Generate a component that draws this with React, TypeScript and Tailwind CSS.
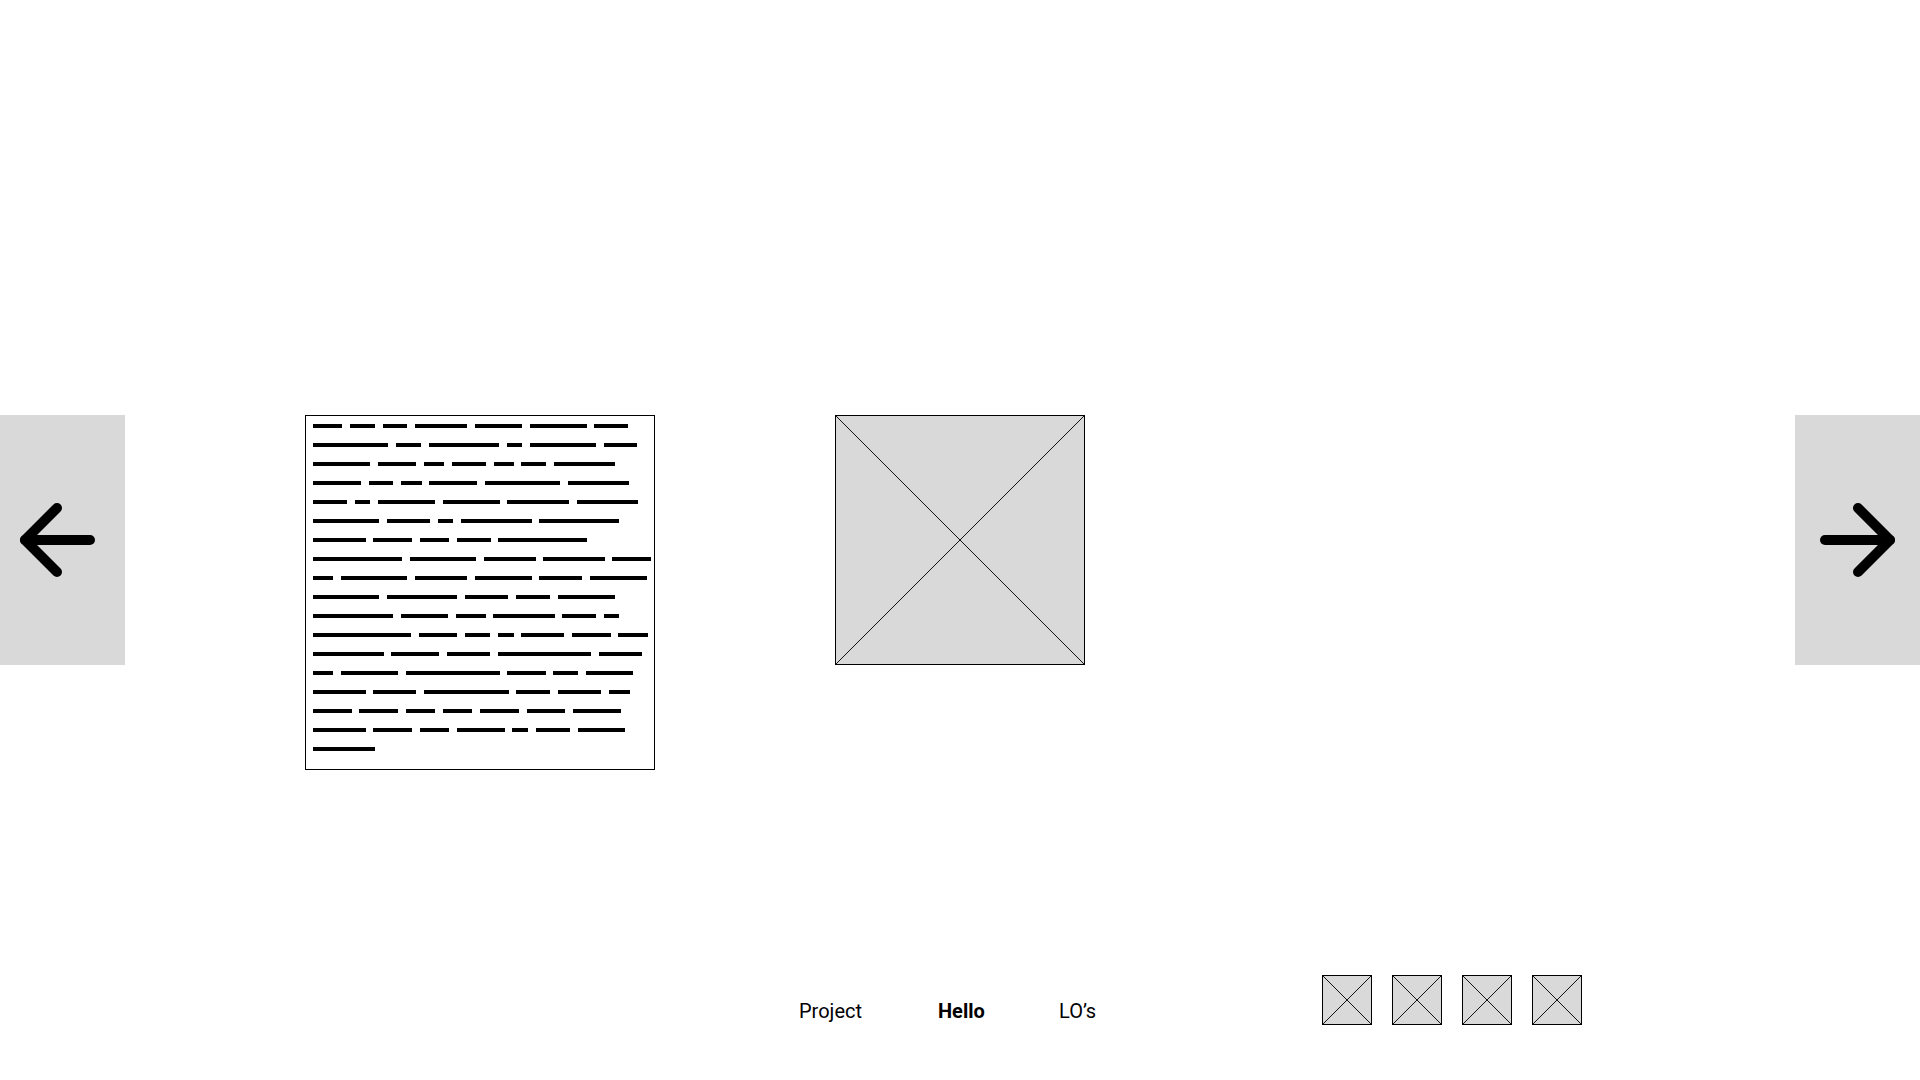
const textRows: number[][] = [
  [29.3, 24.7, 24.7, 52, 47.3, 56.7, 33.7],
  [75.3, 24.7, 70.7, 15.3, 65.7, 33.7],
  [57, 38.7, 20, 33.7, 20, 24.7, 61.3],
  [48, 24.7, 20.3, 47.7, 75, 61.7],
  [34.3, 15.3, 57, 56.7, 61.3, 61.7],
  [66.3, 43, 15.3, 70.7, 79.7],
  [52.7, 38.3, 29.3, 34, 89],
  [89.3, 65.7, 52, 61.3, 38.3],
  [20.3, 66, 52, 57, 43, 56.7],
  [66.3, 70.3, 43.3, 34, 56.7],
  [80, 47.7, 29.3, 61.3, 33.7, 15.3],
  [98.3, 38.3, 25, 15.7, 43, 38.3, 29.3],
  [70.7, 48, 43, 93.3, 42.7],
  [20.3, 57, 93.7, 38.3, 24.7, 47.3],
  [52.7, 43, 84.3, 34, 43, 20.7],
  [38.7, 38.7, 29.3, 29.3, 38.7, 38.7, 47.7],
  [52.7, 38.3, 29.3, 48, 15.3, 34.3, 47.3],
  [62],
];

function Placeholder({ className }: { className: string }) {
  return (
    <div className={`border border-black bg-[#d9d9d9] ${className}`}>
      <svg className="w-full h-full block" viewBox="0 0 100 100" preserveAspectRatio="none">
        <line x1="0" y1="0" x2="100" y2="100" stroke="#111" strokeWidth="1" vectorEffect="non-scaling-stroke" />
        <line x1="100" y1="0" x2="0" y2="100" stroke="#111" strokeWidth="1" vectorEffect="non-scaling-stroke" />
      </svg>
    </div>
  );
}

function ArrowPanel({ dir }: { dir: 'left' | 'right' }) {
  return (
    <div className="w-[125px] h-[250px] bg-[#d9d9d9] shrink-0">
      <svg width="125" height="250" viewBox="0 0 125 250" fill="none" stroke="#000" strokeWidth="10" strokeLinecap="round" strokeLinejoin="round">
        {dir === 'left' ? (
          <>
            <path d="M90 125H25" />
            <path d="M57 93L25 125L57 157" />
          </>
        ) : (
          <>
            <path d="M30 125H95" />
            <path d="M63 93L95 125L63 157" />
          </>
        )}
      </svg>
    </div>
  );
}

export default function App() {
  const navItems = [
    { label: 'Project', active: false, cls: 'w-[139px]' },
    { label: 'Hello', active: true, cls: 'w-[121px]' },
    { label: 'LO’s', active: false, cls: 'w-[263px]' },
  ];

  return (
    <div className="w-[1920px] h-[1080px] bg-white overflow-hidden pt-[415px] font-['Roboto',_'Liberation_Sans',_sans-serif] text-black">
      <div className="flex items-start">
        <ArrowPanel dir="left" />

        {/* text block */}
        <div className="ml-[180px] w-[350px] h-[355px] border border-black pt-[8px] pl-[7px] flex flex-col gap-[15px]">
          {textRows.map((row, i) => (
            <div key={i} className="flex gap-[7.8px]">
              {row.map((w, j) => (
                <div key={j} className="h-[4px] bg-black" style={{ width: `${w}px` }} />
              ))}
            </div>
          ))}
        </div>

        <Placeholder className="ml-[180px] w-[250px] h-[250px]" />

        <div className="flex-1" />
        <ArrowPanel dir="right" />
      </div>

      <div className="flex items-start mt-[205px] pl-[799px]">
        {navItems.map((item) => (
          <span
            key={item.label}
            className={`${item.cls} shrink-0 mt-[24px] text-[20px] leading-[24px] ${item.active ? 'font-bold' : 'font-normal'}`}
          >
            {item.label}
          </span>
        ))}
        <div className="flex gap-[20px]">
          {[0, 1, 2, 3].map((i) => (
            <Placeholder key={i} className="w-[50px] h-[50px]" />
          ))}
        </div>
      </div>
    </div>
  );
}
